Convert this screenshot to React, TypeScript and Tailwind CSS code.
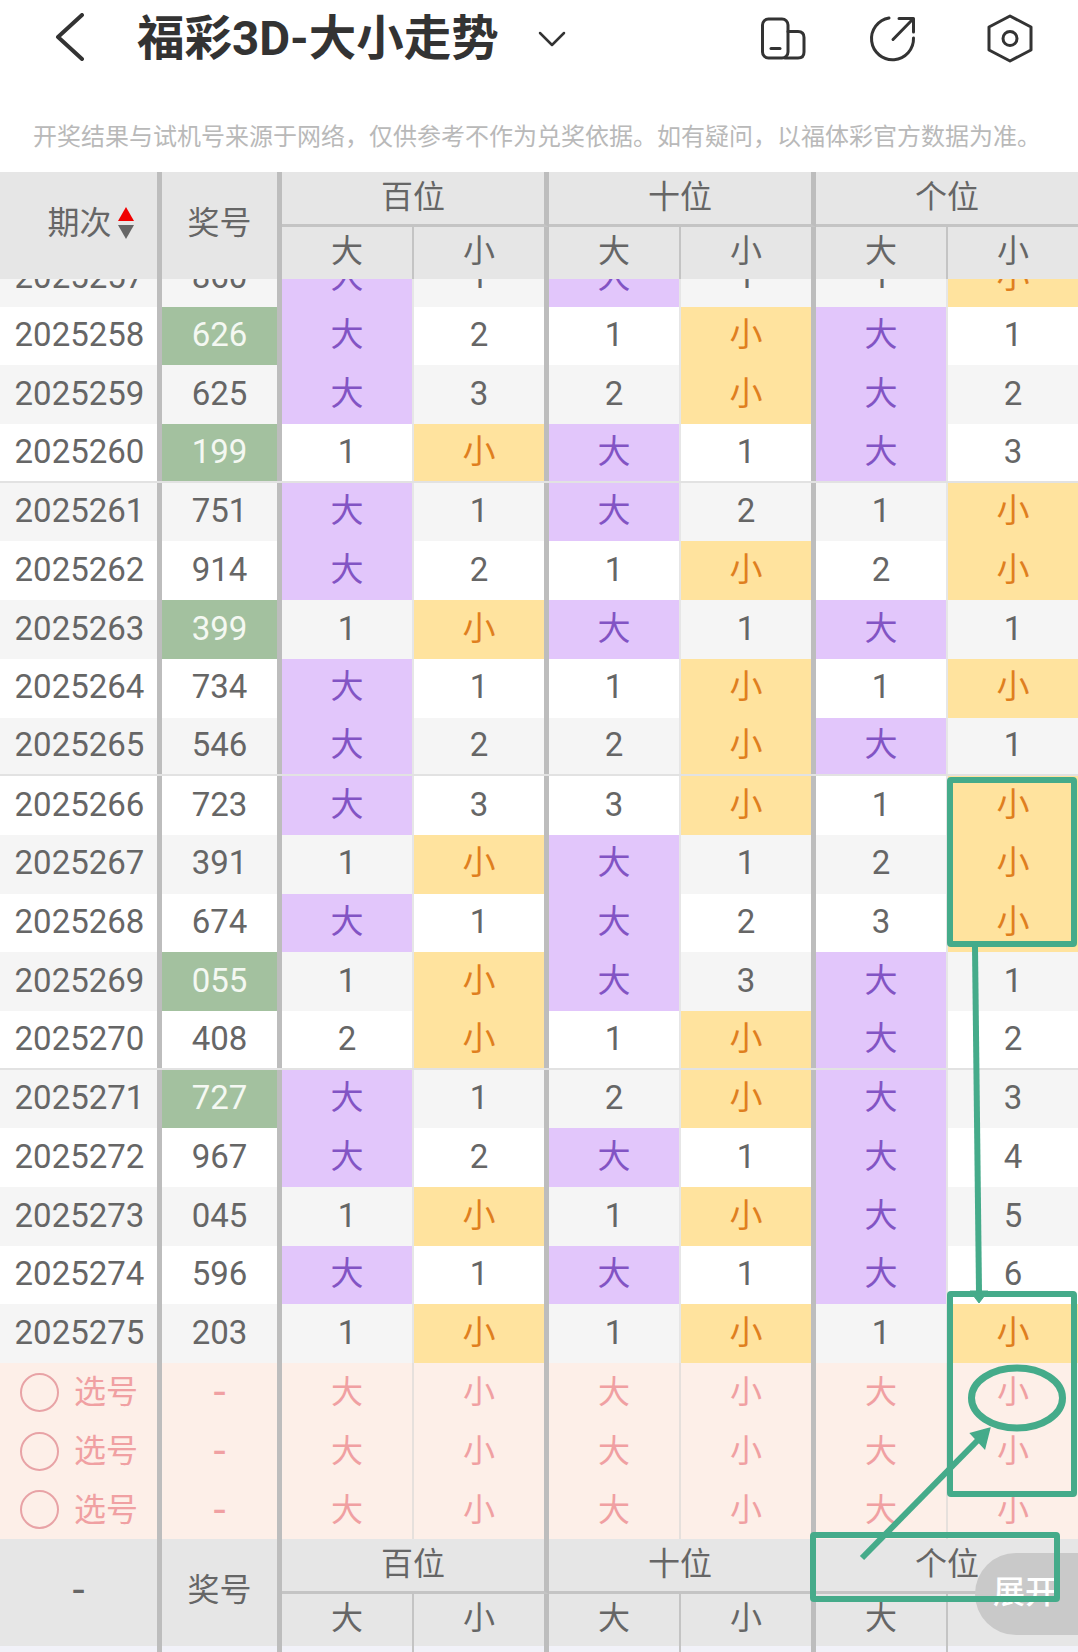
const cols = "grid grid-cols-[162px_120px_132px_135px_132px_135px_132px_130px]";
const fontStack = "font-['Roboto','Noto_Sans_CJK_SC',sans-serif]";

type Row = [string, string, boolean, string, string, string];

// B2 = hit on 大 with a miss count of 2 under 小, S1 the other way round
const rows: Row[] = [
  ["2025258", "626", true, "B2", "S1", "B1"],
  ["2025259", "625", false, "B3", "S2", "B2"],
  ["2025260", "199", true, "S1", "B1", "B3"],
  ["2025261", "751", false, "B1", "B2", "S1"],
  ["2025262", "914", false, "B2", "S1", "S2"],
  ["2025263", "399", true, "S1", "B1", "B1"],
  ["2025264", "734", false, "B1", "S1", "S1"],
  ["2025265", "546", false, "B2", "S2", "B1"],
  ["2025266", "723", false, "B3", "S3", "S1"],
  ["2025267", "391", false, "S1", "B1", "S2"],
  ["2025268", "674", false, "B1", "B2", "S3"],
  ["2025269", "055", true, "S1", "B3", "B1"],
  ["2025270", "408", false, "S2", "S1", "B2"],
  ["2025271", "727", true, "B1", "S2", "B3"],
  ["2025272", "967", false, "B2", "B1", "B4"],
  ["2025273", "045", false, "S1", "S1", "B5"],
  ["2025274", "596", false, "B1", "B1", "B6"],
  ["2025275", "203", false, "S1", "S1", "S1"],
];

function Group({ code, last }: { code: string; last?: boolean }) {
  const big = code[0] === "B";
  const count = code.slice(1);
  return (
    <>
      <div className={`flex items-center justify-center pb-[2px] border-r-2 border-[#e6e6e6] ${big ? "bg-[#e2c6fb] text-[#8254c4]" : ""}`}>{big ? "大" : count}</div>
      <div className={`flex items-center justify-center pb-[2px] ${last ? "" : "border-r-[5px] border-[#bdbdbd]"} ${big ? "" : "bg-[#ffe39e] text-[#df7f1f]"}`}>{big ? count : "小"}</div>
    </>
  );
}

function DataRow({ row, odd, line }: { row: Row; odd: boolean; line?: boolean }) {
  const [period, num, green, a, b, c] = row;
  return (
    <div className={`${cols} h-[58.7px] shrink-0 text-[#666] text-[33px] ${odd ? "bg-[#f5f5f5]" : "bg-white"} ${line ? "border-b-2 border-[#e2e2e2]" : ""}`}>
      <div className="flex items-center justify-center pb-[2px] pl-[2px] border-r-[5px] border-[#bdbdbd]">{period}</div>
      <div className={`flex items-center justify-center pb-[2px] border-r-[5px] border-[#bdbdbd] ${green ? "bg-[#a3c19f] text-[#f4f8f2]" : ""}`}>{num}</div>
      <Group code={a} />
      <Group code={b} />
      <Group code={c} last />
    </div>
  );
}

function PickRow() {
  return (
    <div className={`${cols} h-[58.7px] bg-[#fdefe8] text-[32px] text-[#f0a0a2]`}>
      <div className="flex items-center border-r-[5px] border-[#bdbdbd] pl-[20px] gap-[15px]">
        <span className="w-[39px] h-[39px] rounded-full border-[2.5px] border-[#e8a3a6] shrink-0" />
        <span>选号</span>
      </div>
      <div className="flex items-center justify-center border-r-[5px] border-[#bdbdbd] text-[44px] leading-none">-</div>
      {[0, 1, 2].map((i) => (
        <div key={i} className="contents">
          <div className="flex items-center justify-center border-r-2 border-[#e6e0dc]">大</div>
          <div className={`flex items-center justify-center ${i < 2 ? "border-r-[5px] border-[#bdbdbd]" : ""}`}>小</div>
        </div>
      ))}
    </div>
  );
}

function TableHead({ first }: { first: React.ReactNode }) {
  const groups = ["百位", "十位", "个位"];
  return (
    <div className={`${cols} grid-rows-[55px_52px] bg-[#e6e6e6] text-[#666] text-[32px] shrink-0`}>
      <div className="row-span-2 flex items-center justify-center border-r-[5px] border-[#bdbdbd] pb-[5px]">{first}</div>
      <div className="row-span-2 flex items-center justify-center border-r-[5px] border-[#bdbdbd] pb-[5px]">奖号</div>
      {groups.map((g, i) => (
        <div key={g} className={`col-span-2 flex items-center justify-center border-b-[3px] border-[#c4c4c4] pb-[3px] ${i < 2 ? "border-r-[5px] border-r-[#bdbdbd]" : ""}`}>{g}</div>
      ))}
      {groups.map((g, i) => (
        <div key={g} className="contents">
          <div className="flex items-center justify-center border-r-2 border-[#c4c4c4] pb-[5px]">大</div>
          <div className={`flex items-center justify-center pb-[5px] ${i < 2 ? "border-r-[5px] border-[#bdbdbd]" : ""}`}>小</div>
        </div>
      ))}
    </div>
  );
}

function Annotations() {
  const c = "#45ab8a";
  return (
    <svg className="absolute left-0 top-0 pointer-events-none" width="1078" height="1652" fill="none" stroke={c} strokeWidth="6">
      <rect x="950" y="780" width="124" height="164" rx="1" />
      <line x1="975" y1="947" x2="979" y2="1292" />
      <path d="M970 1291 L988 1291 L979 1303 Z" fill={c} strokeWidth="1" />
      <rect x="950" y="1294" width="124" height="200" rx="1" />
      <ellipse cx="1017" cy="1398" rx="45.5" ry="30" strokeWidth="7" />
      <line x1="862" y1="1558" x2="978" y2="1440" />
      <path d="M988 1430 L973 1434 L984 1446 Z" fill={c} stroke={c} strokeWidth="4" />
      <rect x="813" y="1535" width="244" height="64" rx="1" />
    </svg>
  );
}

export default function App() {
  return (
    <div className={`relative w-[1078px] h-[1652px] overflow-hidden bg-white ${fontStack}`}>
      <header className="flex items-center h-[78px] pl-[55px] text-[#333]">
        <svg width="30" height="48" viewBox="0 0 30 48" fill="none" stroke="#333" strokeWidth="4" strokeLinecap="round" strokeLinejoin="round" className="mb-[4px]">
          <path d="M27 2 L3 24 L27 46" />
        </svg>
        <h1 className="ml-[52px] text-[47.5px] font-bold leading-none mt-[2px]">福彩3D-大小走势</h1>
        <svg width="30" height="16" viewBox="0 0 30 16" fill="none" stroke="#333" strokeWidth="2.5" strokeLinecap="round" strokeLinejoin="round" className="ml-[38px]">
          <path d="M3 2 L15 14 L27 2" />
        </svg>
        <svg width="46" height="44" viewBox="761 19 46 44" fill="none" stroke="#333" strokeWidth="3" strokeLinecap="round" strokeLinejoin="round" className="ml-[194px]">
          <rect x="762.5" y="21" width="25.5" height="39" rx="6" />
          <path d="M788 33.5 H798 Q804 33.5 804 39.5 V54 Q804 60 798 60 H785" />
          <path d="M771 50.5 H780" />
        </svg>
        <svg width="50" height="48" viewBox="869 16 50 48" fill="none" stroke="#333" strokeWidth="3" strokeLinecap="round" strokeLinejoin="round" className="ml-[62px]">
          <path d="M889 19 A21 21 0 1 0 913.5 39" />
          <path d="M893 40.5 L913 20 M899 19.5 H913.5 V33" />
        </svg>
        <svg width="46" height="50" viewBox="987 14 46 50" fill="none" stroke="#333" strokeWidth="3" strokeLinejoin="round" className="ml-[68px]">
          <path d="M1010 16 L1031 27 V50 L1010 61 L989 50 V27 Z" />
          <circle cx="1010" cy="38.5" r="7" />
        </svg>
      </header>

      <p className="h-[94px] pt-[45px] pl-[33px] text-[24px] leading-[28px] text-[#b9b9b9] whitespace-nowrap">开奖结果与试机号来源于网络，仅供参考不作为兑奖依据。如有疑问，以福体彩官方数据为准。</p>

      <TableHead
        first={
          <span className="flex items-center gap-[6px] pl-[24px]">
            期次
            <span className="flex flex-col gap-[4px]">
              <span className="w-0 h-0 border-x-[8px] border-x-transparent border-b-[14px] border-b-[#f00000]" />
              <span className="w-0 h-0 border-x-[8px] border-x-transparent border-t-[14px] border-t-[#666]" />
            </span>
          </span>
        }
      />

      {/* row 2025257 scrolled under the sticky head */}
      <div className="h-[27.7px] overflow-hidden flex flex-col justify-end">
        <DataRow row={["2025257", "860", false, "B1", "B1", "S1"]} odd />
      </div>

      {rows.map((row, i) => (
        <DataRow key={row[0]} row={row} odd={i % 2 === 1} line={i === 2 || i === 7 || i === 12} />
      ))}

      <PickRow />
      <PickRow />
      <PickRow />

      <TableHead first={<span className="text-[44px] leading-none">-</span>} />

      <div className={`${cols} h-[6px] bg-[#f1f1f8]`}>
        <div className="border-r-[5px] border-[#bdbdbd]" />
        <div className="border-r-[5px] border-[#bdbdbd]" />
        <div className="border-r-2 border-[#c4c4c4]" />
        <div className="border-r-[5px] border-[#bdbdbd]" />
        <div className="border-r-2 border-[#c4c4c4]" />
        <div className="border-r-[5px] border-[#bdbdbd]" />
        <div className="border-r-2 border-[#c4c4c4]" />
        <div />
      </div>

      <div className="absolute left-[975px] top-[1553px] w-[103px] h-[82px] rounded-l-full bg-[#c9c9c9] flex items-center pl-[18px] pb-[4px] text-[32px] font-medium text-white">展开</div>
      <Annotations />
    </div>
  );
}
